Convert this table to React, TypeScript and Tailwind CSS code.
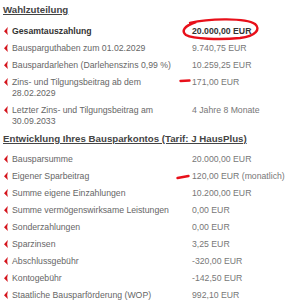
import React from 'react';

type Row = { label: string; value: string; strong?: boolean };

const zuteilung: Row[] = [
  { label: 'Gesamtauszahlung', value: '20.000,00 EUR', strong: true },
  { label: 'Bausparguthaben zum 01.02.2029', value: '9.740,75 EUR' },
  { label: 'Bauspardarlehen (Darlehenszins 0,99 %)', value: '10.259,25 EUR' },
  { label: 'Zins- und Tilgungsbeitrag ab dem 28.02.2029', value: '171,00 EUR' },
  { label: 'Letzter Zins- und Tilgungsbeitrag am 30.09.2033', value: '4 Jahre 8 Monate' },
];

const entwicklung: Row[] = [
  { label: 'Bausparsumme', value: '20.000,00 EUR' },
  { label: 'Eigener Sparbeitrag', value: '120,00 EUR (monatlich)' },
  { label: 'Summe eigene Einzahlungen', value: '10.200,00 EUR' },
  { label: 'Summe vermögenswirksame Leistungen', value: '0,00 EUR' },
  { label: 'Sonderzahlungen', value: '0,00 EUR' },
  { label: 'Sparzinsen', value: '3,25 EUR' },
  { label: 'Abschlussgebühr', value: '-320,00 EUR' },
  { label: 'Kontogebühr', value: '-142,50 EUR' },
  { label: 'Staatliche Bausparförderung (WOP)', value: '992,10 EUR' },
];

const Bullet = () => (
  <svg width="4" height="8" viewBox="0 0 4 8" className="mt-[1px] ml-[1px]">
    <path d="M3.8 0 L0 4.2 L3.8 8 Q2.6 4 3.8 0 Z" fill="#d4141c" />
  </svg>
);

const Heading: React.FC<{ children: React.ReactNode; className?: string }> = ({ children, className }) => (
  <h3 className={`text-[9.7px] leading-[12px] font-bold text-[#444] underline underline-offset-[1px] ${className ?? ''}`}>
    {children}
  </h3>
);

const Table: React.FC<{ rows: Row[] }> = ({ rows }) => (
  <div className="grid grid-cols-[9px_180px_1fr]">
    {rows.map(r => (
      <React.Fragment key={r.label}>
        <div className="py-[3px]"><Bullet /></div>
        <div className={`py-[3px] pr-[12px] leading-[11px] ${r.strong ? 'font-bold text-[#333]' : 'text-[#666]'}`}>
          {r.label}
        </div>
        <div className={`py-[3px] leading-[11px] whitespace-nowrap ${r.strong ? 'font-bold text-[#333]' : 'text-[#777]'}`}>
          {r.value}
        </div>
      </React.Fragment>
    ))}
  </div>
);

export default function App() {
  return (
    <div className="relative w-[289px] h-[300px] overflow-hidden bg-white pl-[3px] pt-[4px] text-[8.7px] font-['Liberation_Sans',Arial,sans-serif]">
      <Heading className="mb-[7px]">Wahlzuteilung</Heading>
      <Table rows={zuteilung} />
      <Heading className="mt-[3px] mb-[6px]">Entwicklung Ihres Bausparkontos (Tarif: J HausPlus)</Heading>
      <Table rows={entwicklung} />

      {/* hand-drawn red marks */}
      <svg className="absolute left-0 top-0 pointer-events-none" width="289" height="300">
        <path
          d="M190 23 C210 18 246 18 255 24 C261 29 256 36 240 38 C220 40 193 39 186 35 C181 31 184 26 196 22"
          fill="none"
          stroke="#e8101a"
          strokeWidth="2.4"
          strokeLinecap="round"
        />
        <path d="M180.5 81 L189.5 80.5" stroke="#e8101a" strokeWidth="2.4" strokeLinecap="round" />
        <path d="M177.5 178 L188.5 176" stroke="#e8101a" strokeWidth="2.4" strokeLinecap="round" />
      </svg>
    </div>
  );
}
